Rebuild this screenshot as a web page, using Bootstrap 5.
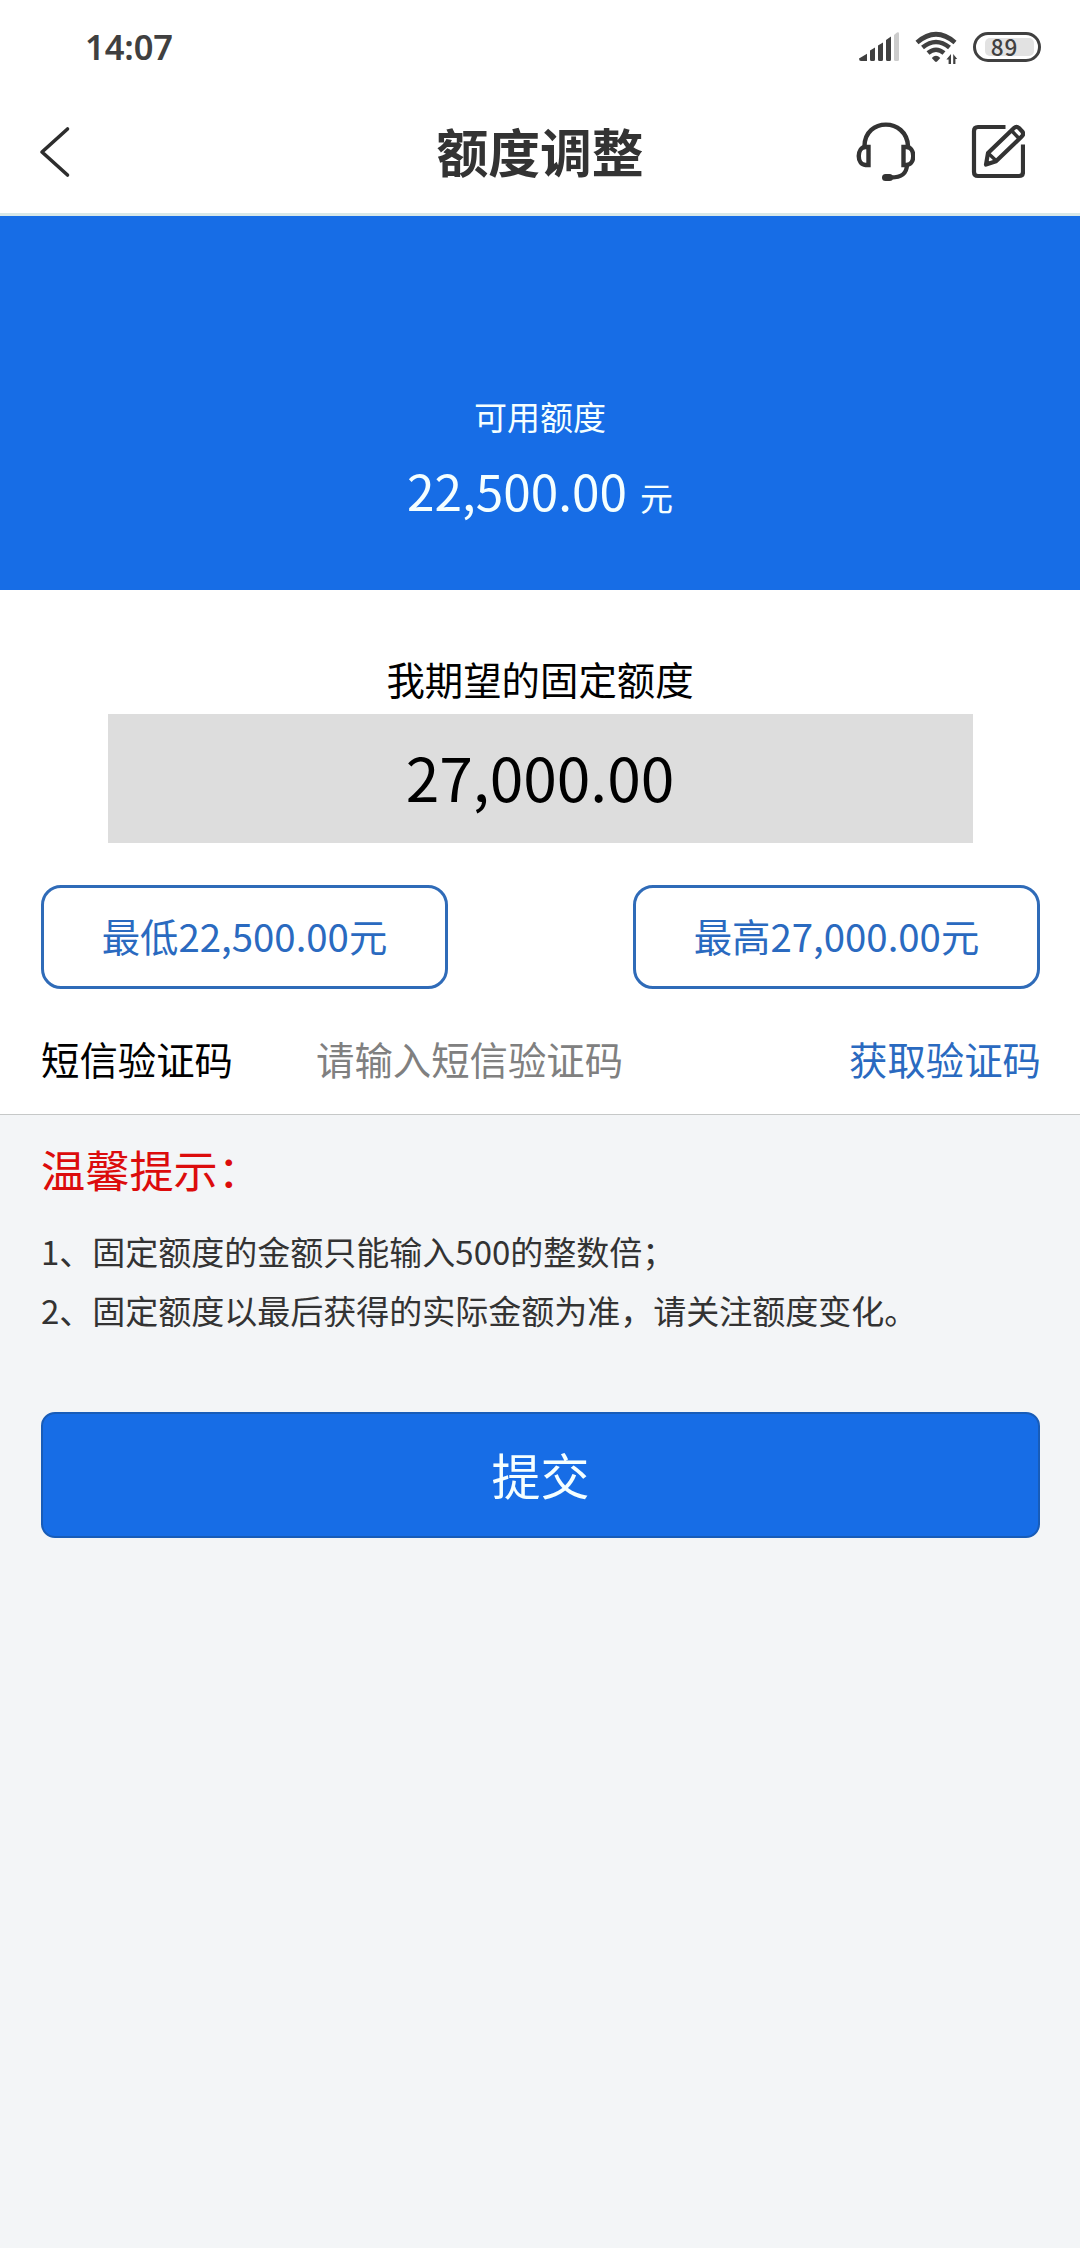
<!DOCTYPE html>
<html lang="zh-CN">
<head>
<meta charset="utf-8">
<meta name="viewport" content="width=device-width, initial-scale=1">
<title>额度调整</title>
<link href="https://cdn.jsdelivr.net/npm/bootstrap@5.3.0/dist/css/bootstrap.min.css" rel="stylesheet">
<style>
  body { font-family: "Noto Sans CJK SC", sans-serif; background: #f3f5f7; color: #000; min-height: 2248px; }
  svg { display: block; flex: none; }
  .status-bar { height: 94px; padding: 0 39px 0 85px; color: #404040; }
  .clock { font: 600 34.5px/94px "Noto Sans", sans-serif; letter-spacing: -.1px; }
  .title-bar { height: 122px; padding: 0 55px 3px 39px; border-bottom: 3px solid #d8e8e8; color: #333; }
  .title-side { width: 170px; }
  .page-title { font-size: 51.8px; line-height: 112px; font-weight: 700; padding-left: 16px; padding-bottom: 2px; }
  .hero { height: 374px; padding-top: 174px; background: #176de6; color: #f5ffff; }
  .hero-label { font-size: 33px; line-height: 52px; }
  .hero-amount { font-size: 49.5px; line-height: 72px; margin-top: 12px; }
  .hero-unit { font-size: 33px; margin-left: 13px; }
  .form-area { height: 525px; border-bottom: 1px solid #c6c8c8; font-size: 38.4px; line-height: 56px; }
  .wish { padding-top: 60px; }
  .amount-input { width: 865px; height: 129px; margin: 8px auto 0; background: #ddd; color: #000; border: 0; border-radius: 0; font-size: 60.5px; padding: 0 0 6px; line-height: 1.4; }
  .amount-input:focus { background: #ddd; box-shadow: none; }
  .side-pad { padding-left: 41px; padding-right: 40px; }
  .limits { margin-top: 42px; }
  .limit-btn { width: 407px; height: 104px; border: 3px solid #2f6bb8; border-radius: 20px; color: #2a6ac0; font-size: 38.4px; line-height: 56px; padding: 0 0 5px; }
  .code-row { margin-top: 41px; }
  .code-label { width: 275px; }
  .code-input { background: none; border: 0; padding: 0; font-size: 38.4px; line-height: 56px; height: 56px; width: 360px; flex: 1; outline: 0; }
  .code-input::placeholder { color: #808080; opacity: 1; }
  .code-link { color: #2a6ac0; font-size: 38.4px; line-height: 56px; margin-right: -1px; }
  .tips-title { color: #dc0c0c; font-size: 44.2px; line-height: 64px; padding-top: 22px; }
  .tips-list { color: #333; font-size: 33px; line-height: 59.4px; margin-top: 21px; }
  .submit-btn { height: 126px; margin-top: 71px; background: #176de6; border: 2px solid #185cb8; border-radius: 14px; color: #f5ffff; font-size: 49px; line-height: 70px; padding: 0 0 2px; }
</style>
<script src="https://cdn.jsdelivr.net/npm/bootstrap@5.3.0/dist/js/bootstrap.bundle.min.js"></script>
</head>
<body>
<div class="status-bar bg-white d-flex justify-content-between align-items-center">
  <span class="clock">14:07</span>
  <svg width="182" height="34" viewBox="859 30 182 34" fill="currentColor">
    <path d="M859 58.500l8-4.700v7.200h-6q-2 0-2-2.500zM870 50.500l5-3v12q0 1.500-1.500 1.500h-2q-1.500 0-1.500-1.500zM878 45.500l5-3v17q0 1.500-1.500 1.500h-2q-1.500 0-1.500-1.500zM886 40l5-3.500v23q0 1.500-1.500 1.500h-2q-1.500 0-1.500-1.500z"/>
    <path d="M894 35l3-2.600q2-.7 2 1.200V59.500q0 1.500-1.500 1.500h-2q-1.500 0-1.500-1.500z" fill="#ccc"/>
    <g fill="none" stroke="currentColor" stroke-width="4.600">
      <path d="M917 42.500Q936 26 955 42.500M922.500 47.500Q936 36.500 949.500 47.500M928 53Q936 46.500 944 53"/>
    </g>
    <path d="M931.800 58q4.200-4.600 8.500 0l-3.300 3.600q-1 .8-2 0z"/>
    <path d="M951 54v10h-2.400v-4.500h-2.200zM953.200 64V54l4 5h-1.800v5z"/>
    <rect x="974.500" y="33.500" width="65" height="27" rx="13.500" fill="none" stroke="currentColor" stroke-width="3"/>
    <rect x="985" y="38" width="49" height="18" rx="5" fill="#e2e2e2"/>
    <text x="1004.500" y="55.500" text-anchor="middle" font-family="Noto Sans CJK SC, sans-serif" font-size="22.500" font-weight="500" letter-spacing=".8">89</text>
  </svg>
</div>
<header class="title-bar bg-white d-flex justify-content-between align-items-center">
  <div class="title-side">
    <svg width="32" height="52" viewBox="0 0 32 52" fill="none" stroke="#2d2d2d" stroke-width="3.600" stroke-linecap="round" stroke-linejoin="round"><path d="M28.500 3L3 26l25.500 23"/></svg>
  </div>
  <h1 class="page-title mb-0">额度调整</h1>
  <div class="title-side d-flex justify-content-between">
    <svg width="60" height="60" viewBox="856 122 60 60" fill="none" stroke="#333" stroke-width="4.400">
      <path d="M865.500 146C866 117.500 907.500 117.500 909 146"/>
      <path d="M869.500 147v18h-3c-9-.5-9-17.500 0-18zM904.500 147v18h3c9-.5 9-17.500 0-18z"/>
      <path d="M908 165c-.5 9-5.500 12.500-16 12.500"/>
      <rect x="883" y="174" width="11" height="7" rx="3.500" fill="#333" stroke="none"/>
    </svg>
    <svg width="54" height="60" viewBox="972 122 54 60" fill="none" stroke="#333" stroke-width="4.200" stroke-linejoin="round">
      <path d="M1006.500 127H979q-4 0-4 4v41q0 4 4 4h41q4 0 4-4v-27.500"/>
      <path d="M987 164.500l2-11.500 26-25q2.500-2.300 5 0l3 3.200q2.300 2.500 0 5l-26 25z"/>
      <path d="M1012.500 130.500l8 8.500M989 153l9 8.500" stroke-width="3.400"/>
      <path d="M986.500 165l1-6 4.500 4z" fill="#333" stroke="none"/>
    </svg>
  </div>
</header>

<section class="hero text-center">
  <div class="hero-label">可用额度</div>
  <div class="hero-amount">22,500.00<span class="hero-unit">元</span></div>
</section>

<main>
  <section class="form-area bg-white">
    <div class="wish text-center">我期望的固定额度</div>
    <input class="form-control amount-input text-center" value="27,000.00" aria-label="固定额度">
    <div class="side-pad limits d-flex justify-content-between">
      <button class="btn limit-btn" type="button">最低22,500.00元</button>
      <button class="btn limit-btn" type="button">最高27,000.00元</button>
    </div>
    <div class="side-pad code-row d-flex align-items-center">
      <label class="code-label" for="sms">短信验证码</label>
      <input class="code-input" id="sms" placeholder="请输入短信验证码">
      <a class="code-link text-decoration-none" href="#">获取验证码</a>
    </div>
  </section>
  <section class="side-pad">
    <div class="tips-title">温馨提示：</div>
    <div class="tips-list">
      <div>1、固定额度的金额只能输入500的整数倍；</div>
      <div>2、固定额度以最后获得的实际金额为准，请关注额度变化。</div>
    </div>
    <button class="btn submit-btn w-100" type="button">提交</button>
  </section>
</main>
</body>
</html>
